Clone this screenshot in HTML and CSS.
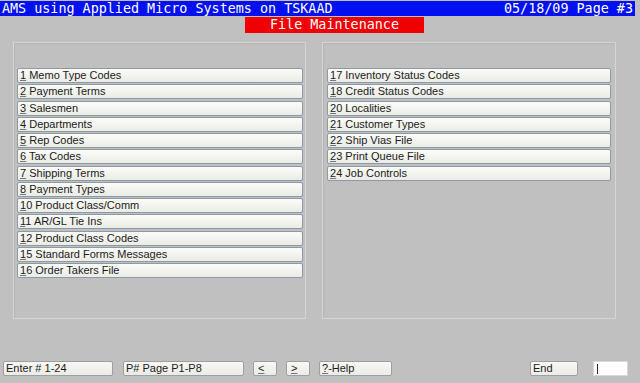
FILE: index.html
```html
<!DOCTYPE html>
<html lang="en">
<head>
    <meta charset="UTF-8">
    <title>File Maintenance</title>
    <link rel="stylesheet" href="styles.css">
</head>
<body>

    <!-- Title bars -->
    <div class="title-bar">
        <span>AMS using Applied Micro Systems on TSKAAD</span>
        <span>05/18/09 Page #3</span>
    </div>
    <div class="sub-title-row">
        <div class="sub-title">File Maintenance</div>
    </div>

    <!-- Menu panels -->
    <div class="panels">
        <div class="panel panel-left">
            <div class="menu-btn"><u>1</u> Memo Type Codes</div>
            <div class="menu-btn"><u>2</u> Payment Terms</div>
            <div class="menu-btn"><u>3</u> Salesmen</div>
            <div class="menu-btn"><u>4</u> Departments</div>
            <div class="menu-btn"><u>5</u> Rep Codes</div>
            <div class="menu-btn"><u>6</u> Tax Codes</div>
            <div class="menu-btn"><u>7</u> Shipping Terms</div>
            <div class="menu-btn"><u>8</u> Payment Types</div>
            <div class="menu-btn"><u>1</u>0 Product Class/Comm</div>
            <div class="menu-btn"><u>1</u>1 AR/GL Tie Ins</div>
            <div class="menu-btn"><u>1</u>2 Product Class Codes</div>
            <div class="menu-btn"><u>1</u>5 Standard Forms Messages</div>
            <div class="menu-btn"><u>1</u>6 Order Takers File</div>
        </div>
        <div class="panel panel-right">
            <div class="menu-btn"><u>1</u>7 Inventory Status Codes</div>
            <div class="menu-btn"><u>1</u>8 Credit Status Codes</div>
            <div class="menu-btn"><u>2</u>0 Localities</div>
            <div class="menu-btn"><u>2</u>1 Customer Types</div>
            <div class="menu-btn"><u>2</u>2 Ship Vias File</div>
            <div class="menu-btn"><u>2</u>3 Print Queue File</div>
            <div class="menu-btn"><u>2</u>4 Job Controls</div>
        </div>
    </div>

    <!-- Bottom command bar -->
    <div class="command-bar">
        <div class="cmd cmd-enter">Enter # 1-24</div>
        <div class="cmd cmd-page">P# Page P1-P8</div>
        <div class="cmd cmd-arrow"><u>&lt;</u></div>
        <div class="cmd cmd-arrow"><u>&gt;</u></div>
        <div class="cmd cmd-help"><u>?</u>-Help</div>
        <div class="spacer"></div>
        <div class="cmd cmd-end">End</div>
        <div class="input-box"><span class="caret"></span></div>
    </div>

</body>
</html>
```

FILE: styles.css
```css
body {
    margin: 0;
    padding: 0;
    width: 640px;
    height: 383px;
    background-color: #c0c0c0;
    font-family: 'Liberation Sans', Arial, sans-serif;
    overflow: hidden;
}

/* Title bars */
.title-bar {
    margin: 1px 5px 0 0;
    height: 15px;
    padding: 0 2px;
    display: flex;
    justify-content: space-between;
    align-items: center;
    background-color: #0010f0;
    color: #fff;
    font-family: 'DejaVu Sans Mono', monospace;
    font-size: 13.4px;
    line-height: 15px;
}

.sub-title-row {
    display: flex;
    padding-left: 245px;
    margin-top: 1px;
}

.sub-title {
    width: 179px;
    height: 16px;
    background-color: #f00000;
    color: #fff;
    font-family: 'DejaVu Sans Mono', monospace;
    font-size: 13.4px;
    line-height: 16px;
    text-align: center;
}

/* Panels */
.panels {
    display: flex;
    gap: 16px;
    margin-top: 9px;
    padding-left: 13px;
}

.panel {
    border: 1px solid #d6d6d6;
    box-shadow: inset 1px 1px 0 #b4b4b4;
    padding-top: 25px;
    display: flex;
    flex-direction: column;
    gap: 1.25px;
    box-sizing: border-box;
    height: 277px;
}

.panel-left {
    width: 293px;
    padding-left: 3px;
    padding-right: 2px;
}

.panel-right {
    width: 294px;
    padding-left: 4px;
    padding-right: 4px;
}

.menu-btn {
    height: 15px;
    box-sizing: border-box;
    border: 1px solid #8c9aa6;
    border-radius: 2px;
    background: linear-gradient(#fbfbf8, #ecece6);
    color: #1a1a1a;
    font-size: 11px;
    line-height: 13px;
    padding-left: 2px;
    white-space: nowrap;
}

.menu-btn u,
.cmd u {
    text-decoration-color: #777;
}

/* Command bar */
.command-bar {
    display: flex;
    align-items: center;
    margin-top: 42px;
    padding-left: 3px;
    padding-right: 12px;
    height: 15px;
}

.cmd {
    height: 15px;
    box-sizing: border-box;
    border: 1px solid #9aa0a6;
    border-radius: 2px;
    background: linear-gradient(#f8f8f4, #ececE6);
    color: #1a1a1a;
    font-size: 11px;
    line-height: 13px;
    padding-left: 2px;
    white-space: nowrap;
}

.cmd-enter {
    width: 110px;
}

.cmd-page {
    width: 121px;
    margin-left: 10px;
}

.cmd-arrow {
    width: 24px;
    margin-left: 9px;
    padding-left: 4px;
}

.cmd-help {
    width: 73px;
    margin-left: 9px;
}

.spacer {
    flex: 1;
}

.cmd-end {
    width: 48px;
}

.input-box {
    width: 35px;
    height: 15px;
    box-sizing: border-box;
    margin-left: 15px;
    background-color: #fff;
    border: 1px solid #d8d8d8;
    padding: 2px 0 0 3px;
}

.caret {
    display: block;
    width: 1px;
    height: 10px;
    background-color: #222;
}
```
